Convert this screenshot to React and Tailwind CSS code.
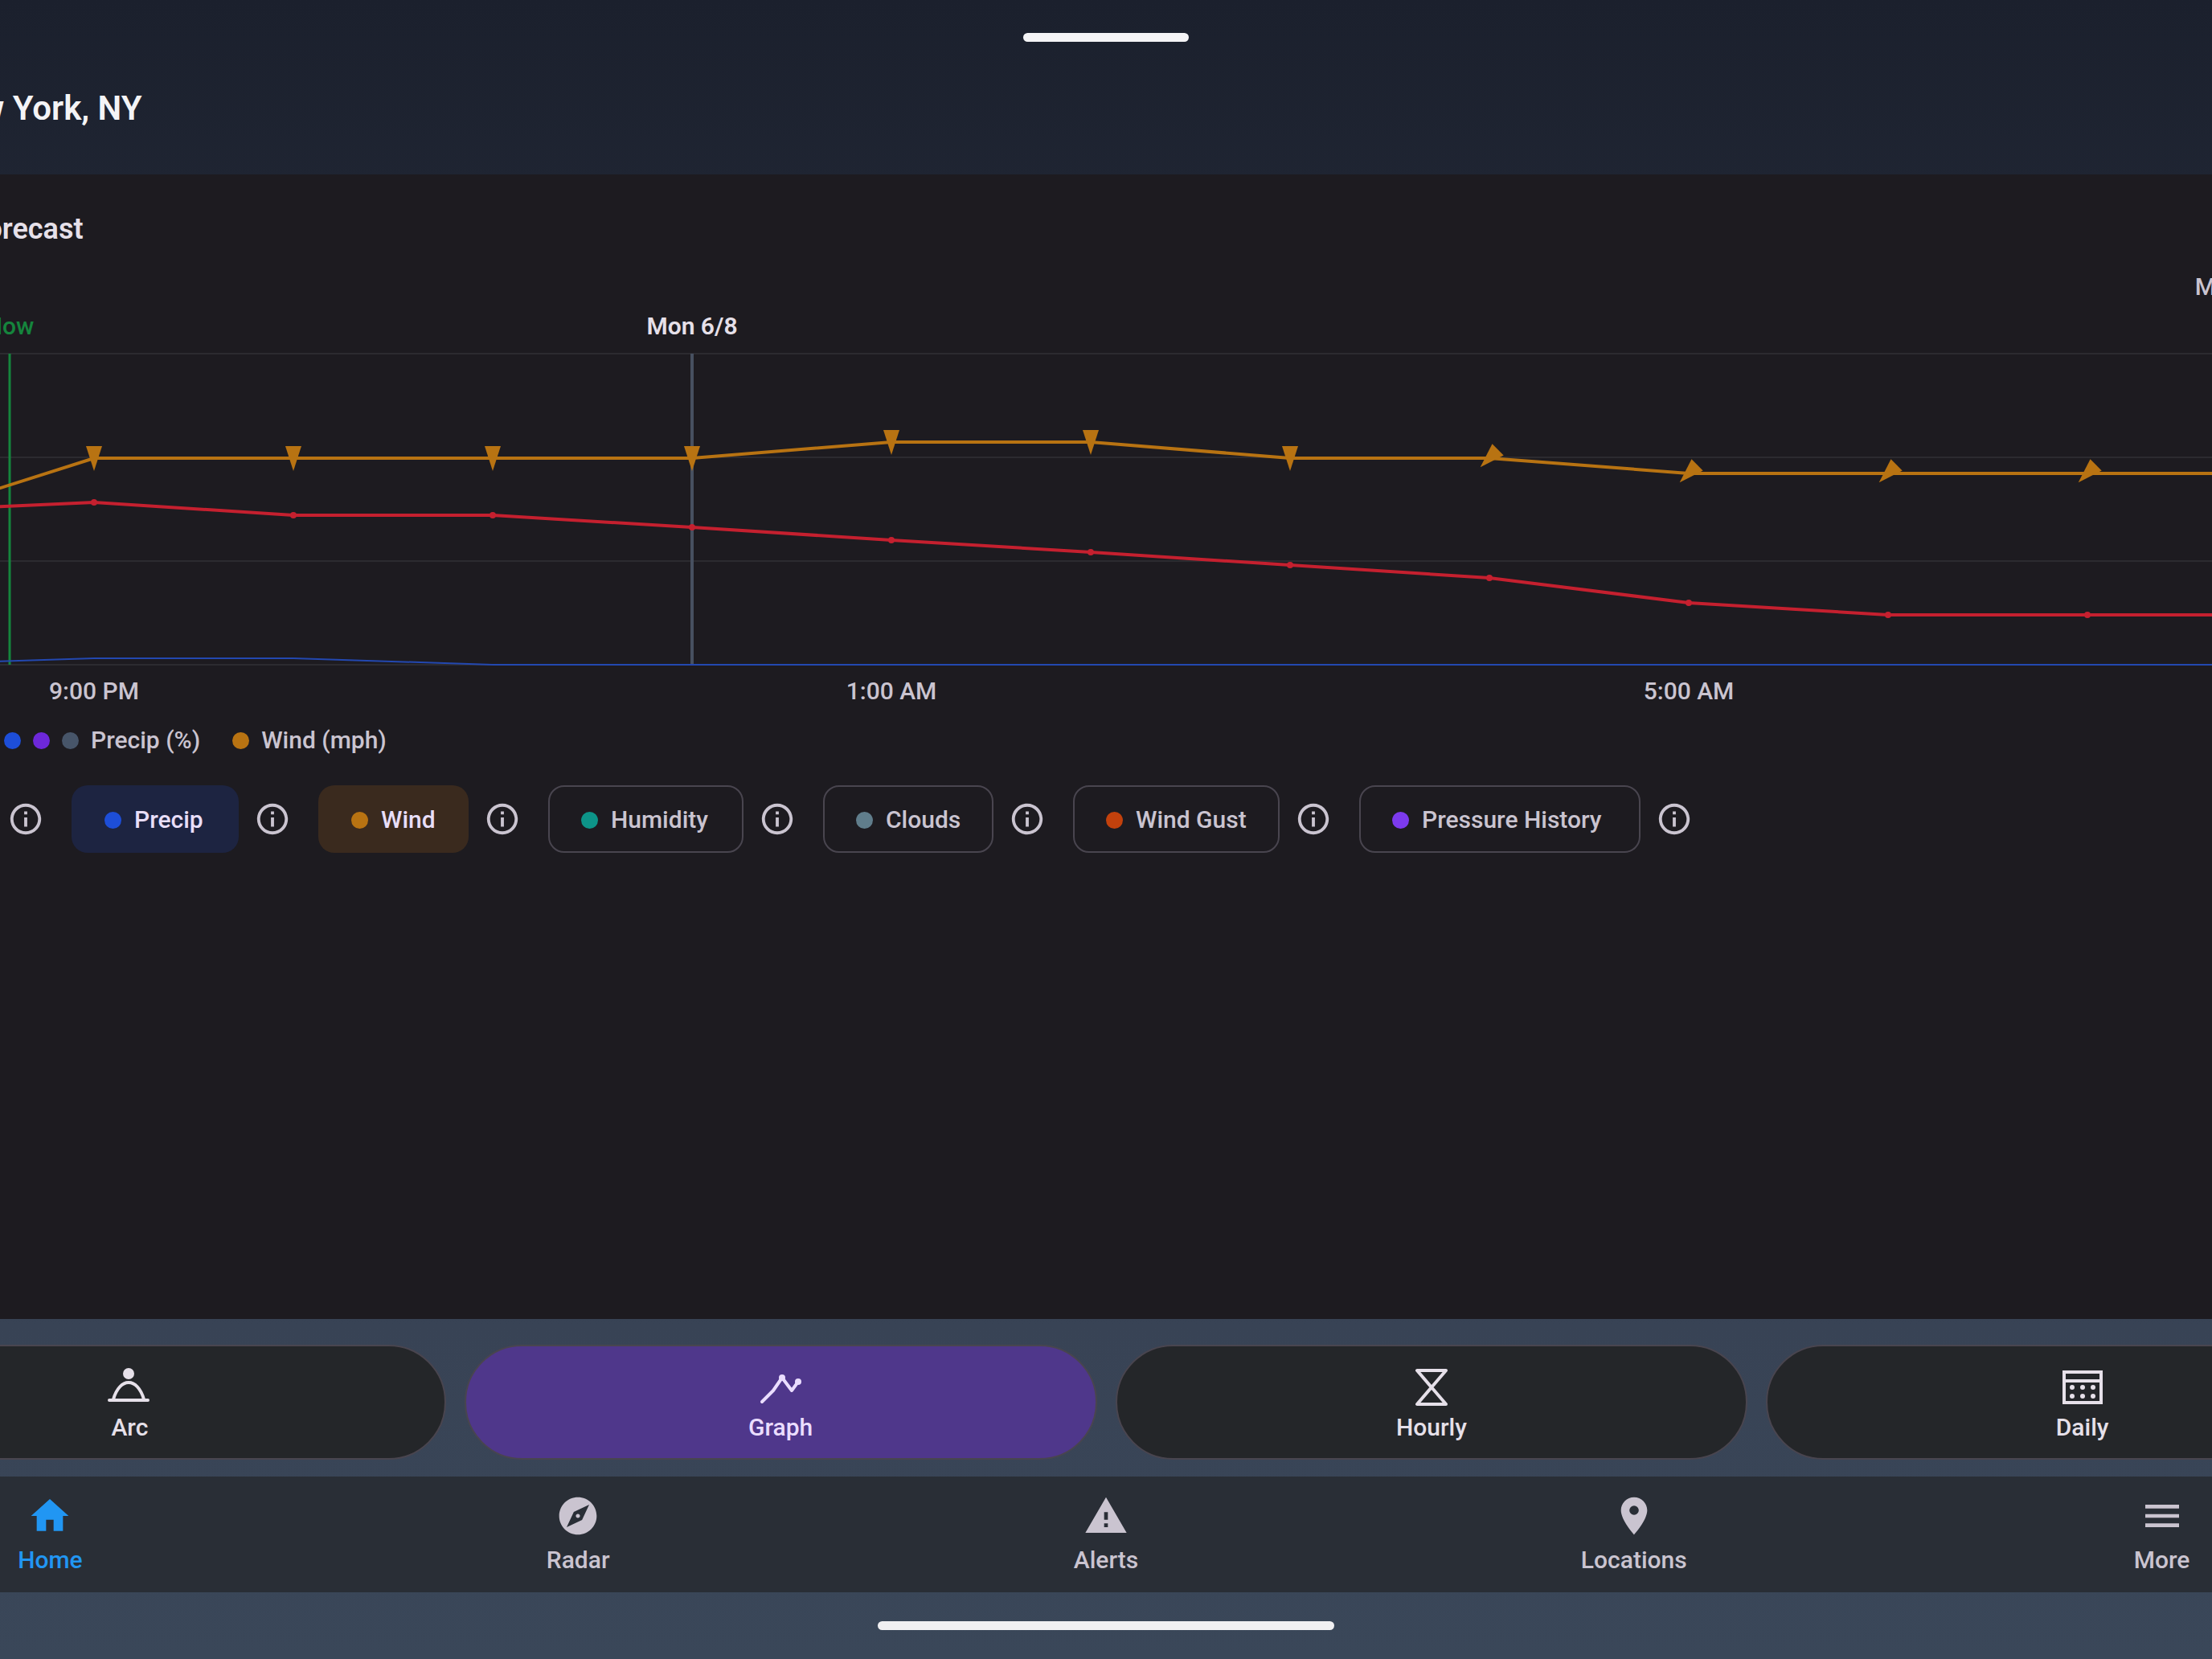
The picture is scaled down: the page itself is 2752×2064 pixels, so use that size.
import { useState } from 'react'
import { MdExplore, MdHome, MdInfoOutline, MdMenu, MdPlace, MdWarning } from 'react-icons/md'

const HOUR_WIDTH = 248
const FIRST_HOUR_X = 135
const BASELINE = 452
const GRID_LINES = [65, 194, 323, BASELINE]

const hours = [
  { temp: 76.3, wind: 9, precip: 0, dir: 0 },
  { temp: 77, wind: 13, precip: 2, dir: 0, label: '9:00 PM' },
  { temp: 76, wind: 13, precip: 2, dir: 0 },
  { temp: 76, wind: 13, precip: 0, dir: 0 },
  { temp: 75, wind: 13, precip: 0, dir: 0, day: 'Mon 6/8' },
  { temp: 74, wind: 14, precip: 0, dir: 0, label: '1:00 AM' },
  { temp: 73, wind: 14, precip: 0, dir: 0 },
  { temp: 72, wind: 13, precip: 0, dir: 0 },
  { temp: 71, wind: 13, precip: 0, dir: 45 },
  { temp: 69, wind: 12, precip: 0, dir: 45, label: '5:00 AM' },
  { temp: 68, wind: 12, precip: 0, dir: 45 },
  { temp: 68, wind: 12, precip: 0, dir: 45 },
  { temp: 68, wind: 12, precip: 0, dir: 45 },
]

const metrics = [
  { name: 'Precip', dot: 'bg-[#1d4ed8]', active: 'bg-[#1d2441]', width: 'w-[208px]' },
  { name: 'Wind', dot: 'bg-[#b87312]', active: 'bg-[#3a2a1e]', width: 'w-[187px]' },
  { name: 'Humidity', dot: 'bg-[#0d9488]', active: 'bg-[#1b3335]', width: 'w-[243px]' },
  { name: 'Clouds', dot: 'bg-[#607d8b]', active: 'bg-[#2b3138]', width: 'w-[212px]' },
  { name: 'Wind Gust', dot: 'bg-[#c2410c]', active: 'bg-[#3e241c]', width: 'w-[257px]' },
  { name: 'Pressure History', dot: 'bg-[#7c3aed]', active: 'bg-[#302149]', width: 'w-[350px]' },
]

const views = [
  { name: 'Arc', icon: ArcIcon },
  { name: 'Graph', icon: GraphIcon },
  { name: 'Hourly', icon: HourglassIcon },
  { name: 'Daily', icon: CalendarIcon },
]

const navItems = [
  { name: 'Home', icon: MdHome },
  { name: 'Radar', icon: MdExplore },
  { name: 'Alerts', icon: MdWarning },
  { name: 'Locations', icon: MdPlace },
  { name: 'More', icon: MdMenu },
]

const hourX = (i) => FIRST_HOUR_X + i * HOUR_WIDTH
const tempY = (temp) => Math.round(250 + (77 - temp) * 15.6)
const windY = (wind) => Math.round(BASELINE - wind * 19.8)
const precipY = (precip) => BASELINE - precip * 4
const toPoints = (getY) => hours.map((h, i) => `${hourX(i)},${getY(h)}`).join(' ')

function ArcIcon() {
  return (
    <svg viewBox="0 0 58 58" className="size-[58px]" fill="none" stroke="currentColor" strokeWidth="4" strokeLinecap="round">
      <circle cx="28" cy="12" r="7" fill="currentColor" stroke="none" />
      <path d="M4 45h48M9 44C17 16 39 16 47 44" />
    </svg>
  )
}

function GraphIcon() {
  return (
    <svg viewBox="0 0 58 58" className="size-[58px]" fill="none" stroke="currentColor" strokeWidth="4" strokeLinecap="round" strokeLinejoin="round">
      <path d="M6 47 20 33 31 17 43 33 51 22" />
      <circle cx="31" cy="17" r="4" fill="currentColor" stroke="none" />
      <circle cx="51" cy="22" r="4" fill="currentColor" stroke="none" />
    </svg>
  )
}

function HourglassIcon() {
  return (
    <svg viewBox="0 0 58 58" className="size-[58px]" fill="none" stroke="currentColor" strokeWidth="4" strokeLinejoin="round">
      <path d="M11 8h36L11 50h36z" />
    </svg>
  )
}

function CalendarIcon() {
  return (
    <svg viewBox="0 0 58 58" className="size-[58px]" fill="none" stroke="currentColor" strokeWidth="4">
      <path d="M6 10h46v38H6zM6 21h46" />
      <g fill="currentColor" stroke="none">
        {[16, 29, 42].map((cx) => (
          <g key={cx}>
            <circle cx={cx} cy="29" r="3" />
            <circle cx={cx} cy="40" r="3" />
          </g>
        ))}
      </g>
    </svg>
  )
}

function ForecastChart() {
  return (
    <svg className="block h-[510px] w-full text-3xl font-medium" role="img" aria-label="Forecast graph">
      {GRID_LINES.map((y) => (
        <line key={y} x1="0" x2="100%" y1={y} y2={y} stroke="#2c2b30" strokeWidth="2" />
      ))}

      {/* Current time */}
      <line x1="278" x2="278" y1="65" y2={BASELINE} stroke="#15853d" strokeWidth="3" />
      <text x="278" y="41" textAnchor="middle" fill="#15853d">Now</text>

      {hours.map((h, i) => h.day && (
        <g key={i}>
          <line x1={hourX(i)} x2={hourX(i)} y1="65" y2={BASELINE} stroke="#475060" strokeWidth="4" />
          <text x={hourX(i)} y="41" textAnchor="middle" fill="#e6e0e9" className="font-semibold">{h.day}</text>
        </g>
      ))}

      <g fill="none">
        <polyline points={toPoints((h) => precipY(h.precip))} stroke="#2348b0" strokeWidth="2" />
        <polyline points={toPoints((h) => tempY(h.temp))} stroke="#c5202f" strokeWidth="4" />
        <polyline points={toPoints((h) => windY(h.wind))} stroke="#b87312" strokeWidth="4" />
      </g>

      {hours.map((h, i) => (
        <g key={i}>
          <circle cx={hourX(i)} cy={tempY(h.temp)} r="4" fill="#c5202f" />
          <path
            d="M-10-15h20L0 16z"
            fill="#b87312"
            transform={`translate(${hourX(i)} ${windY(h.wind)}) rotate(${h.dir})`}
          />
          {h.label && (
            <text x={hourX(i)} y="495" textAnchor="middle" fill="#cac4d0">{h.label}</text>
          )}
        </g>
      ))}
    </svg>
  )
}

function Legend() {
  return (
    <div className="mt-[18px] flex items-center pl-[271px] text-3xl font-medium text-[#cac4d0]">
      <div className="flex items-center gap-[15px]">
        <span className="size-[21px] rounded-full bg-[#1d4ed8]" />
        <span className="size-[21px] rounded-full bg-[#6d28d9]" />
        <span className="size-[21px] rounded-full bg-[#475569]" />
        <span>Precip (%)</span>
      </div>
      <div className="ml-10 flex items-center gap-[15px]">
        <span className="size-[21px] rounded-full bg-[#b87312]" />
        <span>Wind (mph)</span>
      </div>
    </div>
  )
}

function InfoButton({ label }) {
  return (
    <button className="flex size-[84px] shrink-0 items-center justify-center text-[#cac4d0]" aria-label={label}>
      <MdInfoOutline className="size-[46px]" />
    </button>
  )
}

export default function App() {
  const [enabled, setEnabled] = useState(['Precip', 'Wind'])
  const [view, setView] = useState('Graph')
  const [page, setPage] = useState('Home')

  const toggleMetric = (name) => {
    setEnabled(enabled.includes(name) ? enabled.filter((n) => n !== name) : [...enabled, name])
  }

  return (
    <div className="relative min-h-screen overflow-hidden bg-linear-to-b from-[#1b202d] via-[#384355] via-80% to-[#3a4759] font-['Roboto',sans-serif]">
      <div className="absolute top-[41px] left-1/2 h-[11px] w-[206px] -translate-x-1/2 rounded-full bg-[#f4f4f6]" />

      {/* Content runs past both edges of the screen */}
      <div className="-mx-[266px] flex min-h-screen flex-col">
        <header className="pt-[110px] pb-[57px] pl-[188px]">
          <h1 className="text-[42px] leading-[50px] font-semibold text-[#f4f4f6]">New York, NY</h1>
        </header>

        <main className="flex-1 bg-[#1d1b20] pt-[46px]">
          <h2 className="pl-[229px] text-[36px] leading-[44px] font-semibold text-[#e6e0e9]">Forecast</h2>
          <div className="mt-8 flex justify-end pr-[261px] text-3xl font-medium text-[#cac4d0]">M</div>
          <ForecastChart />
          <Legend />

          <div className="mt-[38px] flex items-center pl-[256px]">
            <InfoButton label="About temperature" />
            {metrics.map((m) => {
              const on = enabled.includes(m.name)
              return (
                <div key={m.name} className="ml-[15px] flex items-center">
                  <button
                    onClick={() => toggleMetric(m.name)}
                    aria-pressed={on}
                    className={`flex h-[84px] items-center gap-4 rounded-[20px] border-2 pt-0.5 pl-[39px] text-3xl font-medium whitespace-nowrap ${m.width} ${
                      on ? `${m.active} border-transparent text-[#e8def8]` : 'border-[#49454f] text-[#cac4d0]'
                    }`}
                  >
                    <span className={`size-[21px] rounded-full ${m.dot}`} />
                    {m.name}
                  </button>
                  <InfoButton label={`About ${m.name}`} />
                </div>
              )
            })}
          </div>
        </main>

        <footer>
          <div className="grid grid-cols-4 gap-[23px] px-[34px] pt-8 pb-[21px]">
            {views.map(({ name, icon: Icon }) => (
              <button
                key={name}
                onClick={() => setView(name)}
                className={`flex h-[143px] flex-col items-center gap-[3px] rounded-full border-2 border-[#49454f] pt-[22px] text-3xl font-medium ${
                  view === name ? 'bg-[#4f378b] text-[#eaddff]' : 'bg-[#242629] text-[#e6e0e9]'
                }`}
              >
                <Icon />
                {name}
              </button>
            ))}
          </div>

          <nav className="grid h-36 grid-cols-5 bg-[#292e36]">
            {navItems.map(({ name, icon: Icon }) => (
              <a
                key={name}
                href="#"
                onClick={() => setPage(name)}
                className={`flex flex-col items-center gap-[9px] pt-[21px] text-3xl font-medium ${
                  page === name ? 'text-[#2196f3]' : 'text-[#cac4d0]'
                }`}
              >
                <Icon className="size-14" />
                {name}
              </a>
            ))}
          </nav>

          <div className="flex h-[83px] justify-center pt-9">
            <div className="h-[11px] w-[568px] rounded-full bg-[#f0f0f2]" />
          </div>
        </footer>
      </div>
    </div>
  )
}
